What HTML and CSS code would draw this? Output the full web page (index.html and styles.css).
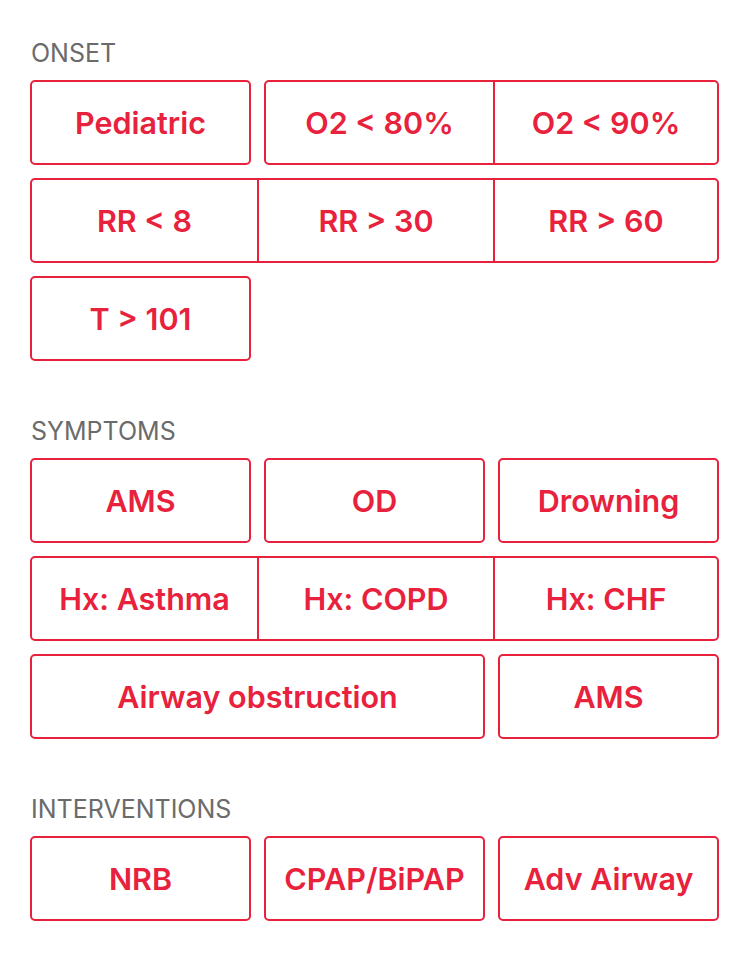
FILE: index.html
```html
<!DOCTYPE html>
<html lang="en">
<head>
<meta charset="utf-8">
<title>Protocol</title>
<link rel="stylesheet" href="styles.css">
</head>
<body>
<main class="page">
  <section class="section">
    <h2 class="label">ONSET</h2>
    <div class="grid">
      <button class="btn">Pediatric</button>
      <div class="group span2 cols-2">
        <button class="seg">O2 &lt; 80%</button>
        <button class="seg">O2 &lt; 90%</button>
      </div>
      <div class="group span3 cols-3">
        <button class="seg">RR &lt; 8</button>
        <button class="seg">RR &gt; 30</button>
        <button class="seg">RR &gt; 60</button>
      </div>
      <button class="btn">T &gt; 101</button>
    </div>
  </section>

  <section class="section">
    <h2 class="label">SYMPTOMS</h2>
    <div class="grid">
      <button class="btn">AMS</button>
      <button class="btn">OD</button>
      <button class="btn">Drowning</button>
      <div class="group span3 cols-3">
        <button class="seg">Hx: Asthma</button>
        <button class="seg">Hx: COPD</button>
        <button class="seg">Hx: CHF</button>
      </div>
      <button class="btn span2">Airway obstruction</button>
      <button class="btn">AMS</button>
    </div>
  </section>

  <section class="section">
    <h2 class="label">INTERVENTIONS</h2>
    <div class="grid">
      <button class="btn">NRB</button>
      <button class="btn">CPAP/BiPAP</button>
      <button class="btn">Adv Airway</button>
    </div>
  </section>
</main>
</body>
</html>
```

FILE: styles.css
```css
* { box-sizing: border-box; }
html, body { margin: 0; padding: 0; background: #ffffff; }
body { font-family: Inter, "Noto Sans", "Liberation Sans", sans-serif; }

.page {
  padding: 36px 31px 0 30px;
}

.section {
  margin-bottom: 53px;
}

.label {
  margin: 0 0 9px 1px;
  font-size: 25px;
  line-height: 35px;
  font-weight: 400;
  color: #6b6b6b;
  letter-spacing: 0;
}

.grid {
  display: grid;
  grid-template-columns: repeat(3, 1fr);
  grid-auto-rows: 85px;
  gap: 13px;
}

.span2 { grid-column: span 2; }
.span3 { grid-column: span 3; }

.btn,
.group {
  border: 2px solid #e8213d;
  border-radius: 5px;
  background: #ffffff;
}

.btn,
.seg {
  margin: 0;
  padding: 0;
  font-family: inherit;
  font-size: 30.5px;
  font-weight: 600;
  color: #e8213d;
  display: flex;
  align-items: center;
  justify-content: center;
  cursor: pointer;
}

.group {
  display: grid;
  overflow: hidden;
}

.cols-2 { grid-template-columns: 227px 1fr; }
.cols-3 { grid-template-columns: 225px 236px 1fr; }

.seg {
  border: none;
  border-left: 2px solid #e8213d;
  background: transparent;
}

.seg:first-child { border-left: none; }
```
